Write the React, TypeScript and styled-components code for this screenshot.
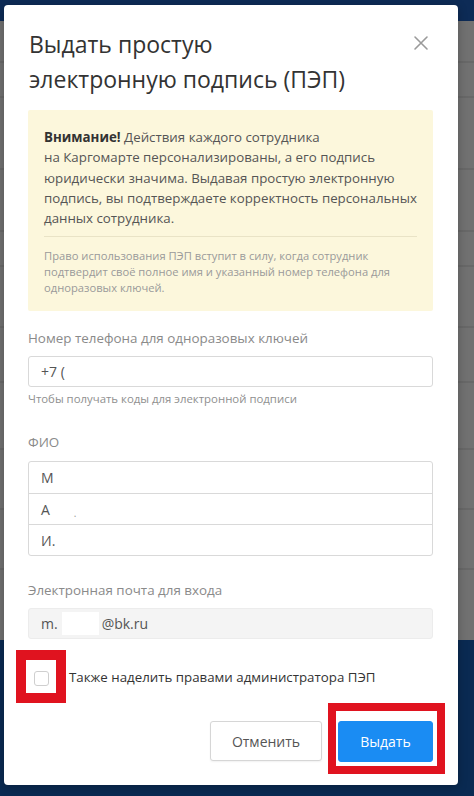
import React from "react";
import styled, { createGlobalStyle } from "styled-components";

const GlobalStyle = createGlobalStyle`
  html, body { margin: 0; padding: 0; width: 474px; height: 796px; overflow: hidden; }
  body { font-family: "Open Sans", "Noto Sans", sans-serif; background: #707070; }
  * { box-sizing: border-box; }
`;

const Page = styled.div`
  position: relative;
  width: 474px;
  height: 796px;
  display: flex;
  flex-direction: column;
  overflow: hidden;
`;

const TopBar = styled.div`
  height: 21px;
  flex-shrink: 0;
  background: #0d2b56;
`;

const Dimmed = styled.div`
  height: 619px;
  flex-shrink: 0;
  background: #717171;
  display: flex;
  flex-direction: column;
`;

const GhostRow = styled.div<{ $h: number }>`
  height: ${(p) => p.$h}px;
  flex-shrink: 0;
  border-bottom: 2px solid #686868;
`;

const BottomBar = styled.div`
  flex: 1;
  background: #0a2a52;
`;

const Modal = styled.div`
  position: absolute;
  left: 4px;
  top: 5px;
  width: 454px;
  height: 780px;
  background: #fff;
  border-radius: 4px;
  box-shadow: 0 2px 10px rgba(0, 0, 0, 0.25);
  padding: 22px 25px 0 24px;
  display: flex;
  flex-direction: column;
`;

const Header = styled.div`
  display: flex;
  align-items: flex-start;
  justify-content: space-between;
`;

const Title = styled.h2`
  margin: 0;
  font-weight: 400;
  font-size: 23px;
  line-height: 35px;
  color: #333;
  padding-left: 1px;
`;

const CloseButton = styled.button`
  border: 0;
  background: none;
  padding: 0;
  margin: 8px 4px 0 0;
  width: 16px;
  height: 16px;
  display: flex;
  cursor: pointer;
`;

const Notice = styled.div`
  margin-top: 13px;
  background: #fcf7dc;
  padding: 17px 16px 15px 16px;
  border-radius: 2px;
`;

const NoticeMain = styled.p`
  margin: 0;
  font-size: 13.3px;
  line-height: 20.3px;
  color: #555;
  white-space: nowrap;
  b { color: #333; font-weight: 700; }
`;

const NoticeDivider = styled.hr`
  margin: 8px 0 11px;
  border: 0;
  border-top: 1px solid #e9e3c6;
`;

const NoticeSmall = styled.p`
  margin: 0;
  font-size: 11.2px;
  line-height: 16px;
  color: #9a9a9a;
  white-space: nowrap;
`;

const Label = styled.div<{ $top: number }>`
  margin-top: ${(p) => p.$top}px;
  font-size: 13.4px;
  line-height: 18px;
  color: #8a8a8a;
`;

const InputBox = styled.div<{ $disabled?: boolean }>`
  margin-top: 9px;
  height: 31px;
  border: 1px solid ${(p) => (p.$disabled ? "#ececec" : "#d9d9d9")};
  background: ${(p) => (p.$disabled ? "#f4f4f4" : "#fff")};
  border-radius: 3px;
  padding: 0 12px;
  display: flex;
  align-items: center;
  font-size: 14px;
  color: #555;
`;

const Helper = styled.div`
  margin-top: 4px;
  font-size: 11.4px;
  line-height: 15px;
  color: #8f8f8f;
`;

const Group = styled.div`
  margin-top: 10px;
  border: 1px solid #d9d9d9;
  border-radius: 3px;
  display: flex;
  flex-direction: column;
`;

const GroupRow = styled.div`
  height: 31px;
  padding: 0 12px;
  display: flex;
  align-items: center;
  font-size: 14px;
  color: #555;
  & + & { border-top: 1px solid #d9d9d9; }
`;

const Redacted = styled.span<{ $w: number; $h: number }>`
  display: inline-block;
  width: ${(p) => p.$w}px;
  height: ${(p) => p.$h}px;
  background: #fff;
  margin: 0 3px 0 4px;
`;

const Dot = styled.span`
  margin-left: 24px;
  margin-top: 8px;
  font-size: 10px;
  color: #999;
`;

const CheckRow = styled.label`
  margin-top: 11px;
  margin-left: -12px;
  display: flex;
  align-items: center;
  gap: 3px;
  font-size: 13.3px;
  color: #333;
`;

const Highlight = styled.div`
  border: 10px solid #e0131f;
  background: #fff;
  width: 50px;
  height: 53px;
  display: flex;
  align-items: center;
  justify-content: center;
  flex-shrink: 0;
`;

const CheckBox = styled.span`
  width: 15px;
  height: 15px;
  border: 1px solid #cfcfcf;
  border-radius: 3px;
  background: #fff;
  margin-top: 3px;
`;

const Footer = styled.div`
  display: flex;
  justify-content: flex-end;
  align-items: flex-start;
  gap: 6px;
  margin-right: -12px;
`;

const ButtonHighlight = styled.div`
  border: 8px solid #e0131f;
  background: #fff;
  padding: 10px 4px 4px 2px;
  display: flex;
`;

const Button = styled.button<{ $primary?: boolean }>`
  height: ${(p) => (p.$primary ? 41 : 40)}px;
  width: ${(p) => (p.$primary ? 95 : 112)}px;
  margin-top: ${(p) => (p.$primary ? 0 : 18)}px;
  border-radius: 3px;
  border: 1px solid ${(p) => (p.$primary ? "#1a8cf3" : "#d6d6d6")};
  background: ${(p) => (p.$primary ? "#1a8cf3" : "#fff")};
  color: ${(p) => (p.$primary ? "#fff" : "#555")};
  font-family: inherit;
  font-size: 14px;
  cursor: pointer;
  box-shadow: ${(p) => (p.$primary ? "none" : "0 1px 2px rgba(0,0,0,0.06)")};
`;

const ghostRows = [42, 35, 72, 62, 35, 61, 55, 67, 60, 60];

export default function App() {
  return (
    <Page>
      <GlobalStyle />
      <TopBar />
      <Dimmed>
        {ghostRows.map((h, i) => (
          <GhostRow key={i} $h={h} />
        ))}
      </Dimmed>
      <BottomBar />
      <Modal>
        <Header>
          <Title>
            Выдать простую
            <br />
            электронную подпись (ПЭП)
          </Title>
          <CloseButton aria-label="Закрыть">
            <svg width="16" height="16" viewBox="0 0 16 16">
              <path d="M2 2 L14 14 M14 2 L2 14" stroke="#9a9a9a" strokeWidth="1.6" strokeLinecap="round" />
            </svg>
          </CloseButton>
        </Header>
        <Notice>
          <NoticeMain>
            <b>Внимание!</b> Действия каждого сотрудника
            <br />
            на Каргомарте персонализированы, а его подпись
            <br />
            юридически значима. Выдавая простую электронную
            <br />
            подпись, вы подтверждаете корректность персональных
            <br />
            данных сотрудника.
          </NoticeMain>
          <NoticeDivider />
          <NoticeSmall>
            Право использования ПЭП вступит в силу, когда сотрудник
            <br />
            подтвердит своё полное имя и указанный номер телефона для
            <br />
            одноразовых ключей.
          </NoticeSmall>
        </Notice>
        <Label $top={18}>Номер телефона для одноразовых ключей</Label>
        <InputBox>+7 (</InputBox>
        <Helper>Чтобы получать коды для электронной подписи</Helper>
        <Label $top={27}>ФИО</Label>
        <Group>
          <GroupRow>М</GroupRow>
          <GroupRow>
            А<Dot>.</Dot>
          </GroupRow>
          <GroupRow>И.</GroupRow>
        </Group>
        <Label $top={25}>Электронная почта для входа</Label>
        <InputBox $disabled>
          m.<Redacted $w={37} $h={23} />@bk.ru
        </InputBox>
        <CheckRow>
          <Highlight>
            <CheckBox />
          </Highlight>
          Также наделить правами администратора ПЭП
        </CheckRow>
        <Footer>
          <Button>Отменить</Button>
          <ButtonHighlight>
            <Button $primary>Выдать</Button>
          </ButtonHighlight>
        </Footer>
      </Modal>
    </Page>
  );
}
